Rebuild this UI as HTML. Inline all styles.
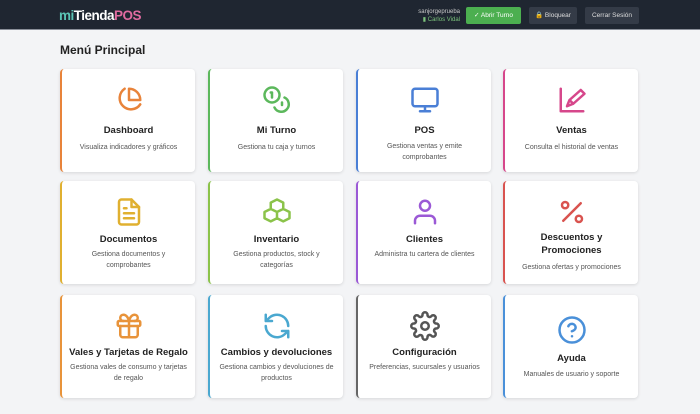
<!DOCTYPE html><html><head><meta charset="utf-8"><style>
*{box-sizing:border-box;margin:0;padding:0}
body{width:700px;height:414px;background:#f3f4f6;font-family:"Liberation Sans",sans-serif;overflow:hidden;position:relative}
.hd{height:30px;background:#1f2631;border-bottom:1px solid #8a8f99;position:relative}
.logo{position:absolute;left:59px;top:8px;font-weight:bold;font-size:13.5px;letter-spacing:-0.5px}
.user{position:absolute;right:240px;top:8px;text-align:right;font-size:6px;color:#ccc;line-height:8px}
.user span{color:#7cc47c}
.btn{position:absolute;top:7px;height:17px;border-radius:2px;font-size:6.5px;color:#ddd;line-height:17px;text-align:center}
h1{position:absolute;left:60px;top:43px;font-size:12px;font-weight:bold;color:#222}
.card{position:absolute;width:135px;height:103px;background:#fff;border-radius:4px;border-left:2px solid;box-shadow:0 1px 3px rgba(0,0,0,.12);text-align:center}
.card svg{position:absolute;left:50%;top:16px;margin-left:-15px;width:30px;height:30px;fill:none;stroke-width:2;stroke-linecap:round;stroke-linejoin:round}
.card b{position:absolute;left:0;right:0;font-size:9.5px;color:#222;font-weight:bold;line-height:13px}
.card p{position:absolute;left:8px;right:8px;font-size:7px;color:#555;line-height:11px}
</style></head><body>
<div class="hd">
<div class="logo"><span style="color:#5bc4b5">mi</span><span style="color:#fff">Tienda</span><span style="color:#e06ba0">POS</span></div>
<div class="user">sanjorgeprueba<br><span>▮ Carlos Vidal</span></div>
<div class="btn" style="left:466px;width:55px;background:#4caf50;color:#fff">✓ Abrir Turno</div>
<div class="btn" style="left:529px;width:48px;background:#343b47">🔒 Bloquear</div>
<div class="btn" style="left:585px;width:54px;background:#343b47">Cerrar Sesión</div>
</div>
<h1>Menú Principal</h1>

<div class="card" style="left:60px;top:69px;border-color:#e8833a"><svg viewBox="0 0 24 24" stroke="#e8833a"><path d="M21 15.5A9 9 0 1 1 8.5 3"/><path d="M12 3a9 9 0 0 1 9 9h-9z"/></svg><b style="top:55px">Dashboard</b><p style="top:73px">Visualiza indicadores y gráficos</p></div>
<div class="card" style="left:208px;top:69px;border-color:#5cb85c"><svg viewBox="0 0 24 24" stroke="#5cb85c"><circle cx="8" cy="8" r="6"/><path d="M18 10a6 6 0 1 1-8 8"/><path d="M7 6h1v4M16 14v2"/></svg><b style="top:55px">Mi Turno</b><p style="top:73px">Gestiona tu caja y turnos</p></div>
<div class="card" style="left:356px;top:69px;border-color:#4a7fd6"><svg viewBox="0 0 24 24" stroke="#4a7fd6"><rect x="2" y="3" width="20" height="14" rx="2"/><path d="M8 21h8M12 17v4"/></svg><b style="top:55px">POS</b><p style="top:72px">Gestiona ventas y emite comprobantes</p></div>
<div class="card" style="left:503px;top:69px;border-color:#d6478b"><svg viewBox="0 0 24 24" stroke="#d6478b"><path d="M3 3v18h18"/><path d="M8 17l2-5 9-8 3 3-9 8z M10 12l3 3"/></svg><b style="top:55px">Ventas</b><p style="top:73px">Consulta el historial de ventas</p></div>

<div class="card" style="left:60px;top:181px;border-color:#e0b030"><svg viewBox="0 0 24 24" stroke="#e0b030"><path d="M14 2H6a2 2 0 0 0-2 2v16a2 2 0 0 0 2 2h12a2 2 0 0 0 2-2V8z"/><path d="M14 2v6h6M8 13h8M8 17h8M8 9h2"/></svg><b style="top:52px">Documentos</b><p style="top:68px">Gestiona documentos y comprobantes</p></div>
<div class="card" style="left:208px;top:181px;border-color:#8bc34a"><svg viewBox="0 0 24 24" stroke="#8bc34a"><path d="M12 2l5 2.5v5L12 12 7 9.5v-5zM7 9.5l5 2.5v5l-5 2.5-5-2.5v-5zM17 9.5l5 2.5v5l-5 2.5-5-2.5v-5z"/></svg><b style="top:52px">Inventario</b><p style="top:68px">Gestiona productos, stock y categorías</p></div>
<div class="card" style="left:356px;top:181px;border-color:#9b59d6"><svg viewBox="0 0 24 24" stroke="#9b59d6"><circle cx="12" cy="7" r="4"/><path d="M4 21v-2a4 4 0 0 1 4-4h8a4 4 0 0 1 4 4v2"/></svg><b style="top:52px">Clientes</b><p style="top:68px">Administra tu cartera de clientes</p></div>
<div class="card" style="left:503px;top:181px;border-color:#d9534f"><svg viewBox="0 0 24 24" stroke="#d9534f"><path d="M19 5L5 19"/><circle cx="6.5" cy="6.5" r="2.5"/><circle cx="17.5" cy="17.5" r="2.5"/></svg><b style="top:50px">Descuentos y<br>Promociones</b><p style="top:81px">Gestiona ofertas y promociones</p></div>

<div class="card" style="left:60px;top:295px;border-color:#e8933a"><svg viewBox="0 0 24 24" stroke="#e8933a"><rect x="3" y="8" width="18" height="4" rx="1"/><path d="M12 8v13M19 12v7a2 2 0 0 1-2 2H7a2 2 0 0 1-2-2v-7M7.5 8a2.5 2.5 0 0 1 0-5C11 3 12 8 12 8s1-5 4.5-5a2.5 2.5 0 0 1 0 5"/></svg><b style="top:51px">Vales y Tarjetas de Regalo</b><p style="top:67px">Gestiona vales de consumo y tarjetas de regalo</p></div>
<div class="card" style="left:208px;top:295px;border-color:#4aa8d0"><svg viewBox="0 0 24 24" stroke="#4aa8d0"><path d="M21 12a9 9 0 0 0-15-6.7L3 8M3 3v5h5M3 12a9 9 0 0 0 15 6.7l3-2.7M21 21v-5h-5"/></svg><b style="top:51px">Cambios y devoluciones</b><p style="top:67px">Gestiona cambios y devoluciones de productos</p></div>
<div class="card" style="left:356px;top:295px;border-color:#666"><svg viewBox="0 0 24 24" stroke="#555"><circle cx="12" cy="12" r="3"/><path d="M19.4 15a1.7 1.7 0 0 0 .3 1.8l.1.1a2 2 0 1 1-2.8 2.8l-.1-.1a1.7 1.7 0 0 0-2.9 1.2V21a2 2 0 1 1-4 0v-.1a1.7 1.7 0 0 0-2.9-1.2l-.1.1a2 2 0 1 1-2.8-2.8l.1-.1A1.7 1.7 0 0 0 3.1 14H3a2 2 0 1 1 0-4h.1a1.7 1.7 0 0 0 1.2-2.9l-.1-.1a2 2 0 1 1 2.8-2.8l.1.1A1.7 1.7 0 0 0 10 3.1V3a2 2 0 1 1 4 0v.1a1.7 1.7 0 0 0 2.9 1.2l.1-.1a2 2 0 1 1 2.8 2.8l-.1.1A1.7 1.7 0 0 0 20.9 10H21a2 2 0 1 1 0 4h-.1a1.7 1.7 0 0 0-1.5 1z"/></svg><b style="top:51px">Configuración</b><p style="top:67px">Preferencias, sucursales y usuarios</p></div>
<div class="card" style="left:503px;top:295px;border-color:#4a90d9"><svg viewBox="0 0 24 24" stroke="#4a90d9" style="top:20px"><circle cx="12" cy="12" r="10"/><path d="M9.1 9a3 3 0 0 1 5.8 1c0 2-3 3-3 3M12 17h.01"/></svg><b style="top:57px">Ayuda</b><p style="top:74px">Manuales de usuario y soporte</p></div>
</body></html>
